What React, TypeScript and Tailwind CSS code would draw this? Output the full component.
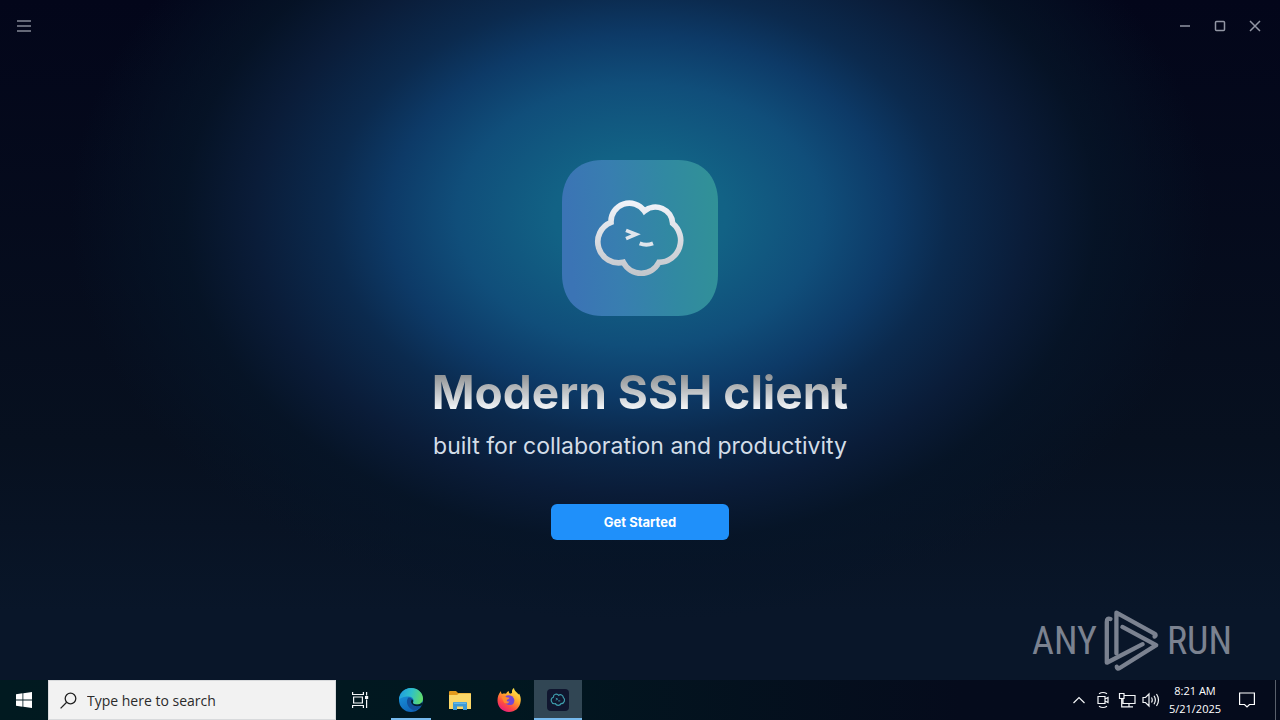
import type { ReactNode } from "react";

function CloudOutline() {
  return (
    <path d="M63 97A55 55 0 0 1 163 63A52 52 0 0 1 248 100A66 66 0 0 1 207 217A60 60 0 0 1 100 217A63 63 0 0 1 63 97Z" />
  );
}

function AppLogo() {
  return (
    <svg viewBox="0 0 156 156" className="size-39" role="img" aria-label="Cloud terminal">
      <defs>
        <linearGradient id="tile" x1="0" x2="1" y1="0.1" y2="0">
          <stop offset="0" stopColor="#3b74b5" />
          <stop offset="0.3" stopColor="#387eb0" />
          <stop offset="0.65" stopColor="#3189a2" />
          <stop offset="1" stopColor="#319296" />
        </linearGradient>
        <linearGradient id="cloud" gradientUnits="userSpaceOnUse" x1="0" x2="0" y1="30" y2="258">
          <stop offset="0" stopColor="#f2f4fa" />
          <stop offset="1" stopColor="#c2c5ca" />
        </linearGradient>
      </defs>
      <path
        d="M0 42C0 16 16 0 40 0H116C140 0 156 16 156 42V114C156 140 140 156 116 156H40C16 156 0 140 0 114Z"
        fill="url(#tile)"
      />
      <g transform="translate(28 30) scale(.33333)" fill="none" stroke="url(#cloud)" strokeLinejoin="miter">
        <g strokeWidth="17">
          <CloudOutline />
        </g>
        <path d="M108 121L138 133L108 146" strokeWidth="11" stroke="#dfe5ec" />
        <path d="M149 160Q169 168 189 160" strokeWidth="12" stroke="#dfe5ec" />
      </g>
    </svg>
  );
}

function WindowButton({ label, children }: { label: string; children: ReactNode }) {
  return (
    <button type="button" aria-label={label} className="flex h-8 w-[35px] items-center justify-center">
      <svg viewBox="0 0 12 12" className="size-3" fill="none" stroke="#9296a4" strokeWidth="1.5">
        {children}
      </svg>
    </button>
  );
}

function Watermark() {
  return (
    <div className="flex items-center gap-1.5 font-['Roboto_Condensed','Roboto',sans-serif] text-[38px] leading-none text-[#7b8290]">
      <span>ANY</span>
      <svg viewBox="266 26 174 190" className="h-[63px] w-[58px]" fill="none" stroke="#7b8290" strokeWidth="13" strokeLinejoin="round" strokeLinecap="round" aria-hidden="true">
        <path d="M288 56Q277 52 277 65V188L385 132" />
        <path d="M306 160V37L422 101Q427 106 421 109" />
        <path d="M324 80L426 135L316 204Q308 209 307 200" />
      </svg>
      <span>RUN</span>
    </div>
  );
}

function EdgeIcon() {
  return (
    <svg viewBox="0 0 24 24" className="size-6" aria-hidden="true">
      <defs>
        <linearGradient id="edgeTop" x1="0" x2="1" y1="0.3" y2="0.5">
          <stop offset="0" stopColor="#1f9be0" />
          <stop offset="0.5" stopColor="#2fc1c9" />
          <stop offset="1" stopColor="#62dc67" />
        </linearGradient>
        <linearGradient id="edgeBody" x1="0" x2="0.6" y1="0" y2="1">
          <stop offset="0" stopColor="#1b9de2" />
          <stop offset="1" stopColor="#0f63b8" />
        </linearGradient>
      </defs>
      <circle cx="12" cy="12" r="12" fill="url(#edgeBody)" />
      <path d="M0 12C0 5 5.500 0 12 0C19 0 24 5 24 10.500C24 14.500 21 16.500 18 16.500C15 16.500 13.500 15.500 14 14.600C15.500 13 14.500 8.500 9.500 8.500C5 8.500 1 10 0 12Z" fill="url(#edgeTop)" />
      <path d="M9.500 9.500C6.500 12 7.500 20 15 22.500C18.500 22 21.500 19.800 22.700 17.600C19 19.500 13 18.500 12 14.500C11.700 12.500 12.600 11.500 12.600 10.500Q11.500 9.200 9.500 9.500Z" fill="#12509c" />
      <path d="M14 14.600C13.500 15.500 15 16.500 18 16.500C20.500 16.500 22.300 15.500 23.200 14.100L24 17L22.700 17.600C18 19.500 12.500 17.500 12 14C12 12.500 12.700 12 12.700 10.800Q15 12.500 14 14.600Z" fill="#03202f" />
    </svg>
  );
}

function FolderIcon() {
  return (
    <svg viewBox="0 0 22 19" className="h-[19px] w-[22px]" aria-hidden="true">
      <path d="M0 1Q0 0 1 0H7L9 2H21Q22 2 22 3V6H0Z" fill="#e39a1c" />
      <path d="M0 4H8L10 2.500H22V18H0Z" fill="#fbd768" />
      <path d="M4 19V12Q4 11 5 11H17Q18 11 18 12V19H14V15.500H8V19Z" fill="#3d9ad6" />
      <path d="M5 11.500H17V13H5Z" fill="#66b7e6" />
    </svg>
  );
}

function FirefoxIcon() {
  return (
    <svg viewBox="0 0 24 24" className="size-6" aria-hidden="true">
      <defs>
        <linearGradient id="fox" x1="0.8" x2="0.2" y1="0" y2="1">
          <stop offset="0" stopColor="#fff14f" />
          <stop offset="0.4" stopColor="#ffa52b" />
          <stop offset="0.7" stopColor="#ff4b42" />
          <stop offset="1" stopColor="#e31587" />
        </linearGradient>
      </defs>
      <path d="M4 3C4 4.500 4.300 5.500 5 6C6.500 5.500 8 5.500 9 5.800C9.500 4.500 10.500 3.500 12 3C11.500 4 12 5 13 5.700L15 5C14.800 3 15 1 17 0C17.200 3 20 4 21.500 6.500L22 5.500C23.500 8 24 10 23.700 13C23 20 18 24 12 24C5.500 24 .5 19 .5 12.500C.5 9 1.500 6 4 3Z" fill="url(#fox)" />
      <path d="M8 8.500C10 7 13 6.800 15 8.200C17.500 10 18 13 16.500 15.500C15 17.500 11 17.800 8.700 15.500L7 11Z" fill="#7446d6" />
      <path d="M4.500 9C6.500 7.500 8.500 8 9.500 9.300L12.500 9.800C12.300 11.200 10.500 11.400 9.800 12C9.600 13.200 11 13.800 12.500 13.500C11.500 15.500 9 16.500 7 14.500Z" fill="#ff8a2e" />
    </svg>
  );
}

function TermiusIcon() {
  return (
    <svg viewBox="0 0 22 22" className="size-[22px]" fill="none" aria-hidden="true">
      <rect width="22" height="22" rx="4" fill="#10162f" />
      <g transform="translate(3 3) scale(.0535)" stroke="#3f9fae" strokeWidth="22">
        <CloudOutline />
        <path d="M108 115L145 133L108 151M152 166H192" strokeWidth="16" />
      </g>
    </svg>
  );
}

function TaskButton({ label, state = "idle", children }: { label: string; state?: "idle" | "open" | "active"; children: ReactNode }) {
  return (
    <button
      type="button"
      aria-label={label}
      className={`flex h-10 w-12 flex-col items-center ${state === "active" ? "bg-[#314654]" : ""}`}
    >
      <span className="flex flex-1 items-center pt-0.5">{children}</span>
      <span className={`h-0.5 ${state === "idle" ? "" : "bg-[#76b9ed]"} ${state === "active" ? "w-full" : "w-10"}`} />
    </button>
  );
}

function TrayButton({ label, children }: { label: string; children: ReactNode }) {
  return (
    <button type="button" aria-label={label} className="flex h-10 w-6 items-center justify-center">
      <svg viewBox="0 0 18 18" className="size-[18px]" fill="none" stroke="#f4f6f8" strokeWidth="1.2" aria-hidden="true">
        {children}
      </svg>
    </button>
  );
}

function Taskbar() {
  return (
    <footer className="flex h-10 items-center bg-linear-to-r from-[#011a20] via-[#011720] via-40% to-[#050b1c] to-75% font-['Open_Sans','Noto_Sans',sans-serif] text-white">
      <button type="button" aria-label="Start" className="flex h-10 w-12 items-center justify-center">
        <svg viewBox="0 0 16 16" className="size-4" fill="#fff" aria-hidden="true">
          <path d="M0 2.200L6.500 1.300V7.600H0ZM7.300 1.200L16 0V7.600H7.300ZM0 8.400H6.500V14.700L0 13.800ZM7.300 8.400H16V16L7.300 14.800Z" />
        </svg>
      </button>
      <label className="flex h-10 w-72 items-center gap-2.5 border border-[#d8dadc] bg-[#f2f2f2] pt-px pl-[11px]">
        <svg viewBox="0 0 17 17" className="size-[17px] shrink-0" fill="none" stroke="#222" strokeWidth="1.3" aria-hidden="true">
          <circle cx="10.500" cy="6.500" r="5.300" />
          <path d="M6.700 10.300L.6 16.400" />
        </svg>
        <input
          type="text"
          aria-label="Search"
          placeholder="Type here to search"
          className="min-w-0 flex-1 bg-transparent text-sm outline-none placeholder:text-[#2b2b2b]"
        />
      </label>
      <nav aria-label="Applications" className="flex gap-px">
        <div className="pr-0.5">
          <TaskButton label="Task view">
            <svg viewBox="0 0 17 16" className="h-4 w-[17px]" fill="none" stroke="#f4f6f8" strokeWidth="1.200" aria-hidden="true">
              <path d="M.6 0V2.500H11.400V0M.6 16V13.500H11.400V16M1.600 5H10.400V11H1.600ZM14.600 0V3.500M14.600 7.500V16" />
              <path d="M13 4H16.200V7H13Z" fill="#f4f6f8" stroke="none" />
            </svg>
          </TaskButton>
        </div>
        <TaskButton label="Edge" state="open"><EdgeIcon /></TaskButton>
        <TaskButton label="File Explorer"><FolderIcon /></TaskButton>
        <TaskButton label="Firefox"><FirefoxIcon /></TaskButton>
        <TaskButton label="Termius" state="active"><TermiusIcon /></TaskButton>
      </nav>
      <div className="ml-auto flex items-center">
        <TrayButton label="Show hidden icons">
          <path d="M3.500 12L9 6.500L14.500 12" />
        </TrayButton>
        <TrayButton label="Meet now">
          <path d="M4 5.500H11V12.500H4ZM11 8L14 6.500V11.500L11 10M5 2.800Q9 .2 13 2.800M5 15.200Q9 17.800 13 15.200" />
        </TrayButton>
        <TrayButton label="Network">
          <path d="M6 4.500H17V12.500H5V8M11 12.500V15.500M7 15.800H15M1.500 2.500H6V7.500H1.500ZM3.700 7.500V15.800H7" />
        </TrayButton>
        <TrayButton label="Volume">
          <path d="M1 6.500H3.500L7 3V15L3.500 11.500H1ZM9.500 6.500Q11 9 9.500 11.500M12 4.800Q14.700 9 12 13.200M14.500 3Q18.500 9 14.500 15" />
        </TrayButton>
        <time className="w-16 text-center text-[11px] leading-[18px]">
          8:21 AM
          <br />
          5/21/2025
        </time>
        <button type="button" aria-label="Notifications" className="flex h-10 w-10 items-center justify-center">
          <svg viewBox="0 0 16 16" className="size-4" fill="none" stroke="#fff" strokeWidth="1.200" aria-hidden="true">
            <path d="M.6 1H15.400V12.500H10.500L8 15L5.500 12.500H.6Z" />
          </svg>
        </button>
        <div className="ml-2 h-10 w-[5px] border-l border-[#5a606c]" />
      </div>
    </footer>
  );
}

export default function App() {
  return (
    <div className="flex min-h-screen flex-col bg-[#091629]">
      <div className="flex flex-1 flex-col bg-[radial-gradient(ellipse_570px_410px_at_50%_215px,#126886_0%,#126285_15%,#104e7a_32%,#0d3a67_44%,#0b2a4e_54%,#0a1c38_68%,#061528cc_80%,#05122400_100%),linear-gradient(#03061a,#07101f_65%,#091629_90%)] font-['Inter',sans-serif]">
        <header className="flex items-center justify-between pt-2.5 pr-2 pl-2">
          <button type="button" aria-label="Menu" className="flex size-8 items-center justify-center">
            <svg viewBox="0 0 14 12" className="h-3 w-3.5" stroke="#858997" strokeWidth="1.600" aria-hidden="true">
              <path d="M0 1H14M0 6H14M0 11H14" />
            </svg>
          </button>
          <div className="flex">
            <WindowButton label="Minimize">
              <path d="M1 6H11" />
            </WindowButton>
            <WindowButton label="Maximize">
              <rect x="1.500" y="1.500" width="9" height="9" rx="1" />
            </WindowButton>
            <WindowButton label="Close">
              <path d="M1 1L11 11M11 1L1 11" />
            </WindowButton>
          </div>
        </header>
        <main className="flex flex-col items-center pt-[118px] text-center">
          <AppLogo />
          <h1 className="mt-[47px] bg-linear-to-b from-[#8f9294] from-20% to-[#f4f7fa] to-80% bg-clip-text text-[46px] leading-[58px] font-bold text-transparent">
            Modern SSH client
          </h1>
          <p className="mt-[9px] text-[23px] leading-8 text-[#d3dde8]">built for collaboration and productivity</p>
          <button type="button" className="mt-[42px] h-9 w-[178px] rounded-md bg-[#1f90fa] pt-px text-[13px] font-bold text-white">
            Get Started
          </button>
        </main>
        <aside className="mt-auto flex justify-end pr-12 pb-2">
          <Watermark />
        </aside>
      </div>
      <Taskbar />
    </div>
  );
}
